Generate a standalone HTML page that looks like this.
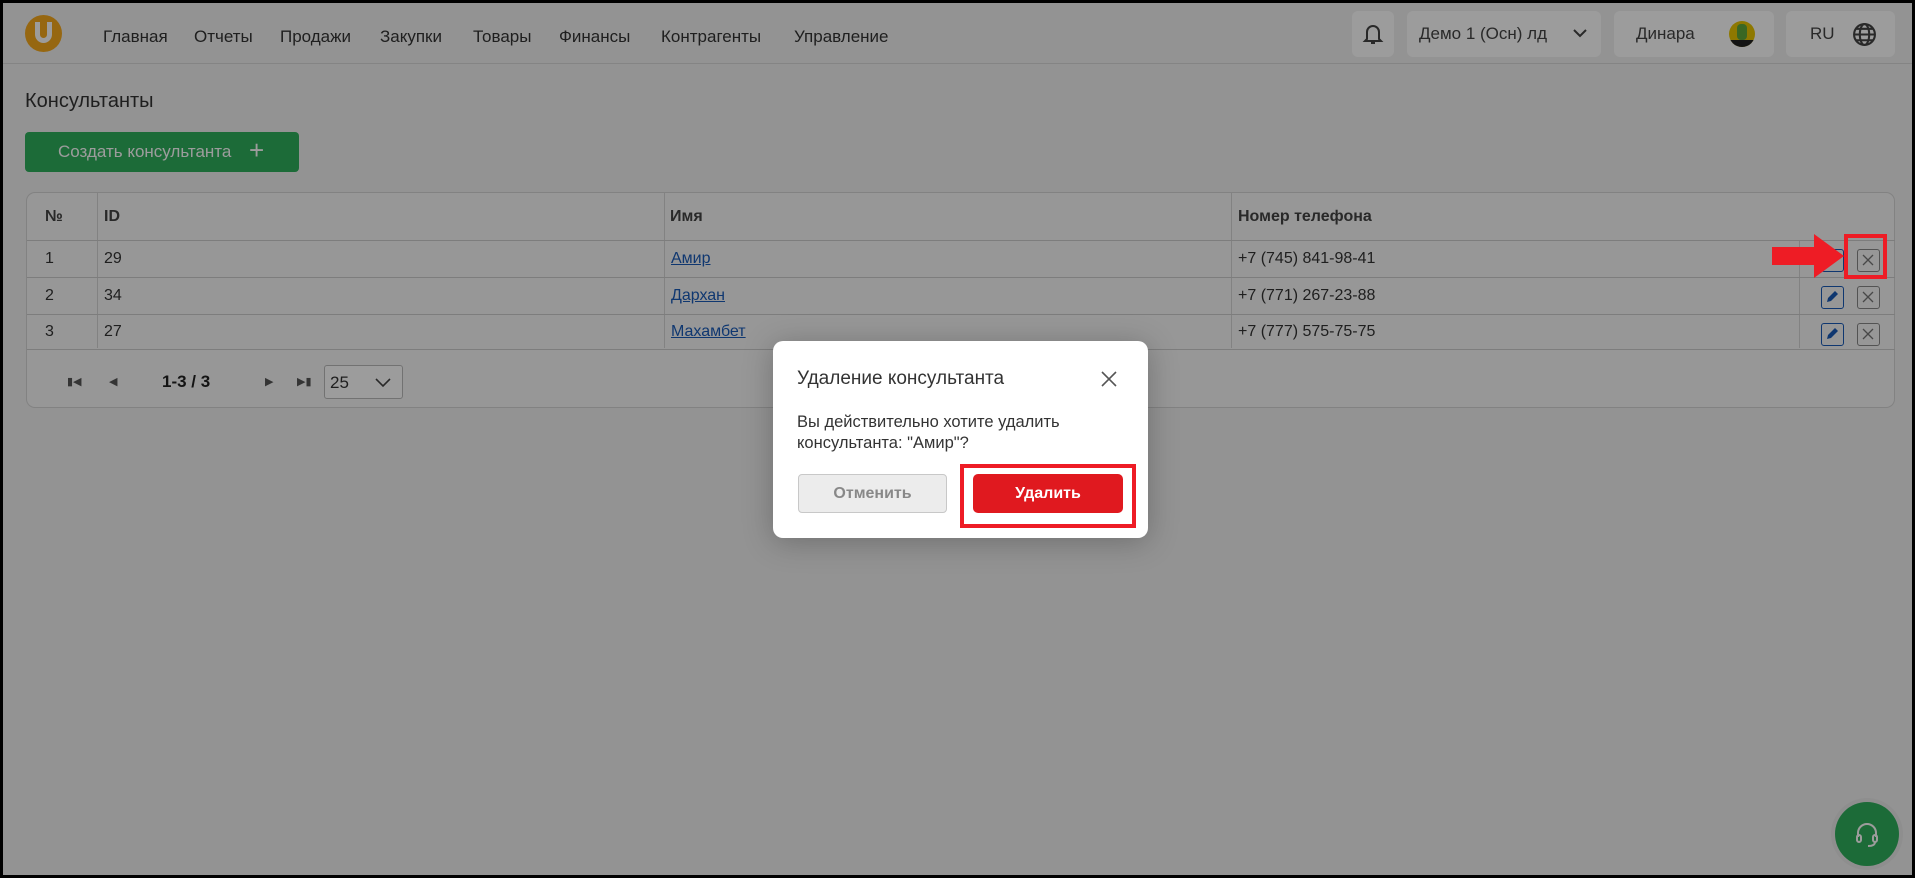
<!DOCTYPE html>
<html><head><meta charset="utf-8"><style>
*{box-sizing:border-box;margin:0;padding:0}
body{width:1915px;height:878px;overflow:hidden;font-family:"Liberation Sans",sans-serif;background:#000;position:relative}
#page{position:absolute;left:3px;top:3px;width:1909px;height:872px;background:#f1f1f1;overflow:hidden}
.abs{position:absolute}
.nav{position:absolute;top:24px;font-size:17px;color:#333}
.hb{position:absolute;top:8px;height:46px;background:#fff;border-radius:6px;font-size:17px;color:#444}
.row{position:absolute;left:0;width:1868px;border-top:1px solid #ccc;font-size:16px;color:#333}
.cell{position:absolute;top:0;height:100%;display:flex;align-items:center}
.sep{position:absolute;top:0;width:1px;background:#d4d4d4}
a{color:#1a5bb8;text-decoration:underline}
#ov{position:absolute;left:0;top:0;width:1915px;height:878px;background:rgba(0,0,0,0.39)}
</style></head><body>
<div id="page">
 <div class="abs" style="left:0;top:0;width:1909px;height:61px;background:#f1f1f1;border-bottom:1px solid #d8d8d8"></div>
 <div class="abs" style="left:22px;top:12px;width:37px;height:37px;border-radius:50%;background:#f5a81c"></div>
 <div class="abs" style="left:32px;top:19px;width:17px;height:21px;border:5px solid #fff;border-top:none;border-radius:0 0 9px 9px"></div>
 <div class="nav" style="left:100px">Главная</div>
 <div class="nav" style="left:191px">Отчеты</div>
 <div class="nav" style="left:277px">Продажи</div>
 <div class="nav" style="left:377px">Закупки</div>
 <div class="nav" style="left:470px">Товары</div>
 <div class="nav" style="left:556px">Финансы</div>
 <div class="nav" style="left:658px">Контрагенты</div>
 <div class="nav" style="left:791px">Управление</div>
 <div class="hb" style="left:1349px;width:42px"><svg class="abs" style="left:10px;top:11px" width="22" height="24" viewBox="0 0 22 24" fill="none" stroke="#444" stroke-width="2"><path d="M5 17V10a6 6 0 0 1 12 0v7l2 2H3z"/><path d="M9 21h4"/></svg></div>
 <div class="hb" style="left:1404px;width:194px"><span class="abs" style="left:12px;top:13px">Демо 1 (Осн) лд</span><svg class="abs" style="left:166px;top:17px" width="14" height="10" viewBox="0 0 14 10"><path d="M1 2l6 6 6-6" stroke="#444" stroke-width="2" fill="none"/></svg></div>
 <div class="hb" style="left:1611px;width:160px"><span class="abs" style="left:22px;top:13px">Динара</span><div class="abs" style="left:115px;top:10px;width:26px;height:26px;border-radius:50%;background:#e8c400;overflow:hidden"><div class="abs" style="left:8px;top:3px;width:10px;height:16px;background:#5fa83a;border-radius:4px"></div><div class="abs" style="left:0;top:19px;width:26px;height:8px;background:#222"></div></div></div>
 <div class="hb" style="left:1783px;width:109px"><span class="abs" style="left:24px;top:13px">RU</span><svg class="abs" style="left:66px;top:11px" width="25" height="25" viewBox="0 0 24 24" fill="none" stroke="#444" stroke-width="2"><circle cx="12" cy="12" r="10"/><ellipse cx="12" cy="12" rx="4.5" ry="10"/><path d="M2 12h20M4 6.5h16M4 17.5h16"/></svg></div>

 <div class="abs" style="left:22px;top:87px;font-size:20px;color:#333">Консультанты</div>
 <div class="abs" style="left:22px;top:129px;width:274px;height:40px;background:#2eaf5c;border-radius:4px;color:#fff;font-size:17px;padding:10px 0 0 33px">Создать консультанта <span style="font-size:26px;position:absolute;left:224px;top:3px;font-weight:300">+</span></div>

 <div class="abs" style="left:23px;top:189px;width:1869px;height:216px;background:#f7f7f7;border:1px solid #d4d4d4;border-radius:9px">
  <div class="sep" style="left:70px;height:155px"></div><div class="sep" style="left:637px;height:155px"></div><div class="sep" style="left:1204px;height:155px"></div><div class="sep" style="left:1772px;top:47px;height:108px"></div>
  <div class="row" style="top:0;height:47px;border:none;font-weight:bold;color:#444"><div class="cell" style="left:18px">№</div><div class="cell" style="left:77px">ID</div><div class="cell" style="left:643px">Имя</div><div class="cell" style="left:1211px">Номер телефона</div></div>
  <div class="row" style="top:47px;height:37px"><div class="cell" style="left:18px">1</div><div class="cell" style="left:77px">29</div><div class="cell" style="left:644px"><a>Амир</a></div><div class="cell" style="left:1211px">+7 (745) 841-98-41</div></div>
  <div class="row" style="top:84px;height:37px"><div class="cell" style="left:18px">2</div><div class="cell" style="left:77px">34</div><div class="cell" style="left:644px"><a>Дархан</a></div><div class="cell" style="left:1211px">+7 (771) 267-23-88</div></div>
  <div class="row" style="top:121px;height:36px;border-bottom:1px solid #ccc"><div class="cell" style="left:18px">3</div><div class="cell" style="left:77px">27</div><div class="cell" style="left:644px"><a>Махамбет</a></div><div class="cell" style="left:1211px">+7 (777) 575-75-75</div></div>
  <div class="abs" style="left:1794px;top:56px;width:23px;height:23px;border:1.5px solid #1a5bb8;border-radius:3px"></div>
  <div class="abs" style="left:1794px;top:93px;width:23px;height:23px;border:1.5px solid #1a5bb8;border-radius:3px"><svg width="20" height="20" viewBox="0 0 20 20"><path d="M5 15l1-4 7-7 3 3-7 7z" fill="#1a5bb8"/></svg></div>
  <div class="abs" style="left:1794px;top:130px;width:23px;height:23px;border:1.5px solid #1a5bb8;border-radius:3px"><svg width="20" height="20" viewBox="0 0 20 20"><path d="M5 15l1-4 7-7 3 3-7 7z" fill="#1a5bb8"/></svg></div>
  <div class="abs" style="left:1830px;top:56px;width:23px;height:23px;border:1.5px solid #888;border-radius:3px"><svg width="20" height="20" viewBox="0 0 20 20"><path d="M5 5l10 10M15 5L5 15" stroke="#777" stroke-width="1.3"/></svg></div>
  <div class="abs" style="left:1830px;top:93px;width:23px;height:23px;border:1.5px solid #888;border-radius:3px"><svg width="20" height="20" viewBox="0 0 20 20"><path d="M5 5l10 10M15 5L5 15" stroke="#777" stroke-width="1.3"/></svg></div>
  <div class="abs" style="left:1830px;top:130px;width:23px;height:23px;border:1.5px solid #888;border-radius:3px"><svg width="20" height="20" viewBox="0 0 20 20"><path d="M5 5l10 10M15 5L5 15" stroke="#777" stroke-width="1.3"/></svg></div>
  <div class="abs" style="left:40px;top:182px;font-size:11px;color:#555">&#9646;&#9664;</div>
  <div class="abs" style="left:82px;top:182px;font-size:11px;color:#555">&#9664;</div>
  <div class="abs" style="left:135px;top:179px;font-size:17px;font-weight:bold;color:#222">1-3 / 3</div>
  <div class="abs" style="left:238px;top:182px;font-size:11px;color:#555">&#9654;</div>
  <div class="abs" style="left:270px;top:182px;font-size:11px;color:#555">&#9654;&#9646;</div>
  <div class="abs" style="left:297px;top:172px;width:79px;height:34px;border:1px solid #bbb;border-radius:3px;background:#fff;font-size:17px;color:#333;padding:7px 0 0 5px">25<svg class="abs" style="left:50px;top:12px" width="16" height="10" viewBox="0 0 16 10"><path d="M1 1l7 7 7-7" stroke="#444" stroke-width="1.6" fill="none"/></svg></div>
 </div>
 <div class="abs" style="left:1832px;top:799px;width:64px;height:64px;border-radius:50%;background:#2eaf5c;box-shadow:0 0 0 4px #e8e8e8"><svg class="abs" style="left:18px;top:18px" width="28" height="28" viewBox="0 0 28 28" fill="none" stroke="#fff" stroke-width="2"><path d="M5 17v-4a9 9 0 0 1 18 0v4"/><rect x="4" y="15" width="4" height="7" rx="2"/><rect x="20" y="15" width="4" height="7" rx="2"/><path d="M22 22q0 4-7 4"/></svg></div>
</div>
<div id="ov"></div>
<svg class="abs" style="left:1770px;top:232px" width="75" height="48" viewBox="0 0 75 48"><path d="M2 15h42V2l30 22-30 22V33H2z" fill="#ee1c25"/></svg>
<div class="abs" style="left:1844px;top:234px;width:43px;height:45px;border:4px solid #ee1c25"></div>
<div class="abs" style="left:773px;top:341px;width:375px;height:197px;background:#fff;border-radius:10px;box-shadow:0 4px 30px rgba(0,0,0,0.25)">
 <div class="abs" style="left:24px;top:27px;font-size:19px;color:#333">Удаление консультанта</div>
 <svg class="abs" style="left:328px;top:30px" width="16" height="16" viewBox="0 0 16 16"><path d="M1 1l14 14M15 1L1 15" stroke="#555" stroke-width="1.6"/></svg>
 <div class="abs" style="left:24px;top:71px;font-size:16.5px;line-height:21px;color:#333">Вы действительно хотите удалить<br>консультанта: "Амир"?</div>
 <div class="abs" style="left:25px;top:133px;width:149px;height:39px;background:#ececec;border:1px solid #c8c8c8;border-radius:4px;font-size:16px;font-weight:bold;color:#888;text-align:center;line-height:37px">Отменить</div>
 <div class="abs" style="left:187px;top:123px;width:176px;height:64px;border:4px solid #ee1c25"></div>
 <div class="abs" style="left:200px;top:133px;width:150px;height:39px;background:#e0191f;border-radius:5px;font-size:16px;font-weight:bold;color:#fff;text-align:center;line-height:39px">Удалить</div>
</div>
</body></html>
